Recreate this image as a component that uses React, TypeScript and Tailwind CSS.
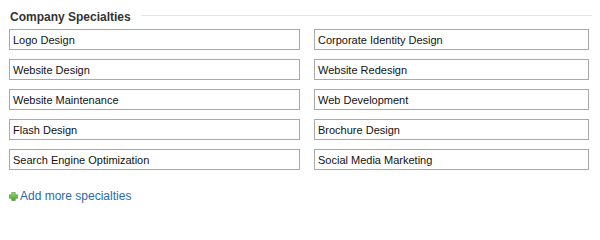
import { useState } from 'react';

const specialties = [
  'Logo Design',
  'Corporate Identity Design',
  'Website Design',
  'Website Redesign',
  'Website Maintenance',
  'Web Development',
  'Flash Design',
  'Brochure Design',
  'Search Engine Optimization',
  'Social Media Marketing',
];

function PlusIcon() {
  return (
    <svg width="9" height="9" viewBox="0 0 9 9" className="shrink-0">
      <defs>
        <linearGradient id="plusg" x1="0" y1="0" x2="0" y2="1">
          <stop offset="0" stopColor="#9ddc72" />
          <stop offset="1" stopColor="#46a02e" />
        </linearGradient>
      </defs>
      <path
        d="M2.8 0.4h3.4v2.4h2.4v3.4h-2.4v2.4h-3.4v-2.4h-2.4v-3.4h2.4z"
        fill="url(#plusg)"
        stroke="#3b8a26"
        strokeWidth="0.6"
        strokeLinejoin="round"
      />
    </svg>
  );
}

export default function App() {
  const [values, setValues] = useState<string[]>(specialties);

  return (
    <div className="w-[600px] h-[207px] bg-white pt-[10px] pl-[9px] pr-[8px] font-['Liberation_Sans',Arial,sans-serif]">
      {/* Section heading */}
      <div className="flex h-[14px]">
        <h2 className="text-[12px] leading-[14px] font-bold text-[#333] pl-[1px] whitespace-nowrap">
          Company Specialties
        </h2>
        <div className="flex-1 ml-[10px] mt-[5px] h-px bg-[#e3e3e3]" />
      </div>

      {/* Specialties grid */}
      <div className="mt-[5px] grid grid-cols-[291px_275px] gap-x-[14px] gap-y-[9px]">
        {values.map((v, i) => (
          <input
            key={i}
            value={v}
            onChange={(e) => {
              const next = [...values];
              next[i] = e.target.value;
              setValues(next);
            }}
            className="h-[21px] border border-[#a9a9a9] px-[3px] text-[11px] text-[#111] outline-none bg-white"
          />
        ))}
      </div>

      <a href="#" className="mt-[19px] flex items-center gap-[2px] text-[12px] leading-[14px] text-[#2b6aa8]">
        <PlusIcon />
        <span>Add more specialties</span>
      </a>
    </div>
  );
}
